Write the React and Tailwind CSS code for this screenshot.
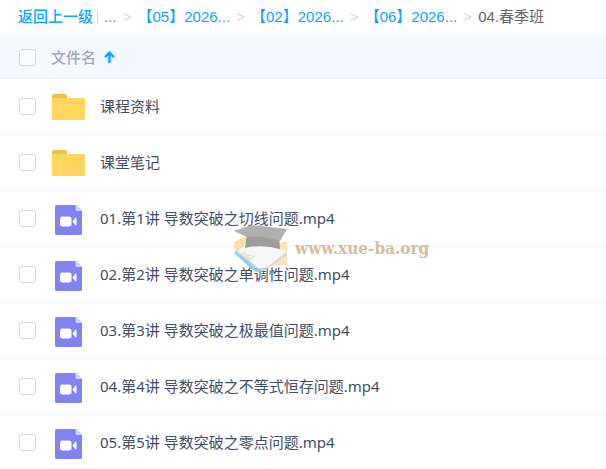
import React, { useState } from 'react'

const crumbs = ['【05】2026...', '【02】2026...', '【06】2026...']

const files = [
    { name: '课程资料', type: 'folder' },
    { name: '课堂笔记', type: 'folder' },
    { name: '01.第1讲 导数突破之切线问题.mp4', type: 'video' },
    { name: '02.第2讲 导数突破之单调性问题.mp4', type: 'video' },
    { name: '03.第3讲 导数突破之极最值问题.mp4', type: 'video' },
    { name: '04.第4讲 导数突破之不等式恒存问题.mp4', type: 'video' },
    { name: '05.第5讲 导数突破之零点问题.mp4', type: 'video' },
]

const FolderIcon = () => (
    <svg className="w-[34px] h-7" viewBox="0 0 34 28" aria-hidden="true">
        <path d="M1 2.5Q1 1 2.5 1H14.5Q16 1 16 2.5V8H1Z" fill="#edc04b" />
        <path d="M1 5H32.5Q34 5 34 6.5V25.5Q34 27 32.5 27H2.5Q1 27 1 25.5Z" fill="#ffd55d" />
    </svg>
)

const VideoIcon = () => (
    <svg className="w-[27px] h-8" viewBox="0 -2 27 32" aria-hidden="true">
        <path d="M1.5 0H20.5L27 6V28.5Q27 30 25.5 30H1.5Q0 30 0 28.5V1.5Q0 0 1.5 0Z" fill="#8183f1" />
        <path d="M20.5 0L27 6H22Q20.5 6 20.5 4.5Z" fill="#cdcdfa" />
        <rect x="5" y="11.5" width="11.5" height="10" rx="2.5" fill="#fff" />
        <path d="M17.5 16.5L20.5 12.8Q21.5 12 21.5 13.2V19.8Q21.5 21 20.5 20.2Z" fill="#fff" />
    </svg>
)

const SortIcon = () => (
    <svg className="w-[11px] h-3" viewBox="0 0 11 12" fill="none" stroke="#06a7ff" strokeWidth="2.4" aria-hidden="true">
        <path d="M5.5 12V2M1 6.2L5.5 1.7L10 6.2" />
    </svg>
)

const Checkbox = ({ label, checked, onChange }) => (
    <input
        type="checkbox"
        aria-label={label}
        checked={checked}
        onChange={onChange}
        className="block appearance-none w-[17px] h-[17px] rounded-[3px] border border-[#d1d7e0] bg-white/60 checked:bg-[#06a7ff] checked:border-[#06a7ff]"
    />
)

const Watermark = () => (
    <div className="absolute left-[233px] top-[224px] flex items-center gap-2 pointer-events-none" aria-hidden="true">
        <svg className="w-[54px] h-12" viewBox="0 0 54 48">
            <g opacity="0.75">
                <path d="M1 18L13 12L18 30L5 28L1 24Z" fill="#ffd48a" />
                <path d="M46 19L54 17V41H36L30 36Z" fill="#ffd79a" />
                <path d="M1 29L5 25L30 45L26 48Q22 48 20 46Z" fill="#63bdec" />
                <path d="M4 27L15 19L54 27L32 45Q28 47 25 44Z" fill="#f3f5f6" />
                <path d="M4 27Q14 33 25 44Q28 47 32 45L54 28V31L33 46Q28 49 24 46Q15 36 4 29Z" fill="#c5ccd1" />
                <path d="M9 29L17 35L22 32M11 28L15 32L18 31" fill="none" stroke="#dfc79f" />
            </g>
            <g opacity="0.85">
                <path d="M14 11L46 13L47 25Q29 20 12 24Z" fill="#8d8d8d" />
                <path d="M1 7L18 1L54 5L47 17Q30 12 14 13Z" fill="#a3a3a3" />
            </g>
        </svg>
        <span className="font-['DejaVu_Serif_Condensed','DejaVu_Serif',serif] text-[17px] leading-6 font-bold text-[#d3bd9b]">www.xue-ba.org</span>
    </div>
)

const App = () => {
    const [selected, setSelected] = useState([])
    const allSelected = selected.length === files.length

    const toggle = (name) => {
        setSelected(selected.includes(name) ? selected.filter((n) => n !== name) : [...selected, name])
    }

    const toggleAll = () => {
        setSelected(allSelected ? [] : files.map((file) => file.name))
    }

    return (
        <div className="relative w-full h-screen overflow-hidden bg-white text-[15px] font-['Noto_Sans','Noto_Sans_CJK_SC',sans-serif]">
            <nav className="flex items-center h-[34px] pl-[18px] whitespace-nowrap font-['Liberation_Sans','Noto_Sans_CJK_SC',sans-serif]">
                <a href="#" className="text-[#06a7ff] font-medium">返回上一级</a>
                <span className="w-px h-3.5 ml-1 mr-1.5 bg-[#c4d8f4]"></span>
                <span className="text-[#818999]">...</span>
                {crumbs.map((crumb) => (
                    <React.Fragment key={crumb}>
                        <span className="w-[21px] text-center text-[#c4d8f4]">&gt;</span>
                        <a href="#" className="text-[#06a7ff]">{crumb}</a>
                    </React.Fragment>
                ))}
                <span className="w-[21px] text-center text-[#c4d8f4]">&gt;</span>
                <span className="text-[#666]">04.春季班</span>
            </nav>

            <table className="w-full border-separate border-spacing-0 text-left">
                <thead>
                    <tr className="h-[45px] bg-[#f3faff]">
                        <th className="w-[51px] pl-[19px] pt-0.5 border-b border-[#eaf4fc]">
                            <Checkbox label="全选" checked={allSelected} onChange={toggleAll} />
                        </th>
                        <th className="pt-0.5 border-b border-[#eaf4fc]">
                            <button className="flex items-center gap-2 font-medium text-[#a2a9b9]">
                                文件名
                                <SortIcon />
                            </button>
                        </th>
                    </tr>
                </thead>
                <tbody>
                    {files.map((file) => (
                        <tr key={file.name} className="h-14">
                            <td className="pl-[19px] border-b border-[#eff5fc]">
                                <Checkbox
                                    label={file.name}
                                    checked={selected.includes(file.name)}
                                    onChange={() => toggle(file.name)}
                                />
                            </td>
                            <td className="border-b border-[#eff5fc]">
                                <div className="flex items-center gap-[15px]">
                                    <span className="flex justify-center w-[34px]">
                                        {file.type === 'folder' ? <FolderIcon /> : <VideoIcon />}
                                    </span>
                                    <a href="#" className="text-[#424e67] whitespace-nowrap">{file.name}</a>
                                </div>
                            </td>
                        </tr>
                    ))}
                </tbody>
            </table>

            <Watermark />
        </div>
    )
}

export default App
